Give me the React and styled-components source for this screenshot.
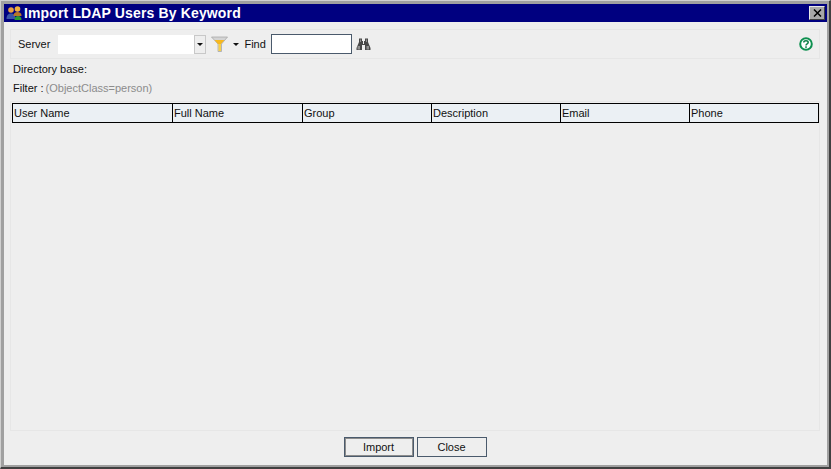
import styled, { createGlobalStyle } from "styled-components";

const COLUMNS = [
  { label: "User Name", width: 160 },
  { label: "Full Name", width: 130 },
  { label: "Group", width: 129 },
  { label: "Description", width: 129 },
  { label: "Email", width: 129 },
  { label: "Phone", width: 128 },
];

const Global = createGlobalStyle`
  html, body { margin: 0; padding: 0; background: #eeeeee; }
  * { box-sizing: border-box; }
`;

const Frame = styled.div`
  width: 831px;
  height: 469px;
  display: flex;
  flex-direction: column;
  background: #eeeeee;
  font-family: "Liberation Sans", Arial, sans-serif;
  font-size: 11px;
  color: #111;
  border-style: solid;
  border-width: 1px 2px 2px 1px;
  border-color: #d0d0d0 #404040 #404040 #d0d0d0;
`;

const Inner = styled.div`
  flex: 1;
  min-height: 0;
  display: flex;
  flex-direction: column;
  border-style: solid;
  border-width: 3px 2px 2px 3px;
  border-color: #a0a0a0;
`;

const TitleBar = styled.div`
  height: 18px;
  flex: none;
  background: #000080;
  display: flex;
  align-items: center;
  padding: 0 2px;
  gap: 2px;
`;

const Title = styled.div`
  flex: 1;
  color: #fff;
  font-size: 14px;
  font-weight: 700;
  letter-spacing: 0.14px;
  white-space: nowrap;
`;

const CloseBox = styled.div`
  width: 16px;
  height: 14px;
  background: #a8a8a8;
  display: flex;
  align-items: center;
  justify-content: center;
  border-style: solid;
  border-width: 1px;
  border-color: #e8e8e8 #404040 #404040 #e8e8e8;
`;

const Body = styled.div`
  flex: 1;
  min-height: 0;
  display: flex;
  flex-direction: column;
  padding: 7px 7px 0 6px;
`;

const Toolbar = styled.div`
  height: 30px;
  flex: none;
  display: flex;
  align-items: center;
  border: 1px solid #e6e6e6;
  padding: 0 6px 0 7px;
`;

const Label = styled.span`
  margin: ${(p) => p.$margin || "0"};
  white-space: nowrap;
`;

const Combo = styled.div`
  display: flex;
  height: 19px;
  margin-left: 8px;
  width: 148px;
`;

const ComboField = styled.div`
  flex: 1;
  background: #fff;
`;

const ComboButton = styled.div`
  width: 12px;
  border: 1px solid #c8c8c8;
  background: #eeeeee;
  display: flex;
  align-items: center;
  justify-content: center;
`;

const Caret = styled.span`
  width: 0;
  height: 0;
  margin: ${(p) => p.$margin || "0"};
  border-left: 3px solid transparent;
  border-right: 3px solid transparent;
  border-top: 3px solid #111;
`;

const FindInput = styled.div`
  width: 81px;
  height: 20px;
  margin-left: 5px;
  background: #fff;
  border: 1px solid #4a5a6c;
`;

const Spacer = styled.div`
  flex: 1;
`;

const InfoLine = styled.div`
  height: 19px;
  flex: none;
  display: flex;
  align-items: center;
  padding-left: 3px;
  gap: 2px;
`;

const Muted = styled.span`
  color: #8c8c8c;
`;

const TablePanel = styled.div`
  flex: 1;
  min-height: 0;
  margin-top: 4px;
  border: 1px solid #e6e6e6;
  padding: 1px 0 0 1px;
`;

const HeaderRow = styled.div`
  display: flex;
  width: 807px;
  height: 20px;
  background: #ebf0f4;
  border: 1px solid #000;
`;

const HeaderCell = styled.div`
  flex: none;
  display: flex;
  align-items: center;
  padding-left: 1px;
  border-right: 1px solid #000;
  white-space: nowrap;
  &:last-child { border-right: 0; }
`;

const Footer = styled.div`
  height: 34px;
  flex: none;
  display: flex;
  justify-content: center;
  align-items: flex-start;
  padding-top: 6px;
  gap: 3px;
`;

const Button = styled.div`
  width: 70px;
  height: 20px;
  display: flex;
  align-items: center;
  justify-content: center;
  background: #eeeeee;
  border: 1px solid #4a5a6c;
  box-shadow: ${(p) => (p.$primary ? "inset 0 0 0 1px #8c8c8c" : "none")};
`;

const UsersIcon = () => (
  <svg width="16" height="16" viewBox="0 0 16 16">
    <circle cx="5" cy="5" r="2.800" fill="#e8a040" />
    <path d="M0.500 14c0-4 2-5.500 4.500-5.500s4.500 1.500 4.500 5.500z" fill="#3a55a8" />
    <circle cx="11.500" cy="4" r="2.800" fill="#f0b040" />
    <path d="M7.500 11c0-3 1.500-4 4-4s4 1 4 4z" fill="#b87828" />
    <path d="M8.500 15c0-3 1.500-4 3.500-4s3.500 1 3.500 4z" fill="#2a9a30" />
  </svg>
);

const CloseIcon = () => (
  <svg width="9" height="8" viewBox="0 0 9 8">
    <path d="M1 0.500L8 7.500M8 0.500L1 7.500" stroke="#000" strokeWidth="1.500" fill="none" />
  </svg>
);

const FunnelIcon = () => (
  <svg width="17" height="16" viewBox="0 0 17 16" style={{ marginLeft: 5 }}>
    <path d="M0.500 1H16.500L10.500 8V15.500H7V8Z" fill="#d4d4d4" stroke="#a8a8a8" strokeWidth="0.800" />
    <path d="M3.500 4H13.500L10 8H7Z" fill="#f6b820" />
    <path d="M7.500 8H10V15H7.500Z" fill="#f8d048" />
  </svg>
);

const BinocularsIcon = () => (
  <svg width="15" height="14" viewBox="0 0 15 14" style={{ marginLeft: 4 }}>
    <path d="M3 1.500H6V4H7V7H8V4H9V1.500H12V5L14.500 11V13H9V8H6V13H0.500V11L3 5Z" fill="#484848" />
    <path d="M1.500 9H4V12.500H1.500ZM10.500 9H13V12.500H10.500ZM4 2.500H5V5H4ZM10 2.500H11V5H10Z" fill="#8f8f8f" />
  </svg>
);

const HelpIcon = () => (
  <svg width="14" height="14" viewBox="0 0 14 14">
    <circle cx="7" cy="7" r="5.800" fill="#fff" stroke="#0f9050" strokeWidth="2" />
    <path d="M4.800 5.500C4.800 3.300 9.200 3.300 9.200 5.500C9.200 7 7 6.800 7 8.500" fill="none" stroke="#0f8048" strokeWidth="1.500" />
    <rect x="6.200" y="9.300" width="1.600" height="1.600" fill="#0f8048" />
  </svg>
);

export default function App() {
  return (
    <>
      <Global />
      <Frame>
        <Inner>
          <TitleBar>
            <UsersIcon />
            <Title>Import LDAP Users By Keyword</Title>
            <CloseBox>
              <CloseIcon />
            </CloseBox>
          </TitleBar>
          <Body>
            <Toolbar>
              <Label>Server</Label>
              <Combo>
                <ComboField />
                <ComboButton>
                  <Caret />
                </ComboButton>
              </Combo>
              <FunnelIcon />
              <Caret $margin="0 0 0 5px" />
              <Label $margin="0 0 0 5px">Find</Label>
              <FindInput />
              <BinocularsIcon />
              <Spacer />
              <HelpIcon />
            </Toolbar>
            <InfoLine>
              <span>Directory base:</span>
            </InfoLine>
            <InfoLine>
              <span>Filter :</span>
              <Muted>(ObjectClass=person)</Muted>
            </InfoLine>
            <TablePanel>
              <HeaderRow>
                {COLUMNS.map((c) => (
                  <HeaderCell key={c.label} style={{ width: c.width }}>
                    {c.label}
                  </HeaderCell>
                ))}
              </HeaderRow>
            </TablePanel>
            <Footer>
              <Button $primary>Import</Button>
              <Button>Close</Button>
            </Footer>
          </Body>
        </Inner>
      </Frame>
    </>
  );
}
